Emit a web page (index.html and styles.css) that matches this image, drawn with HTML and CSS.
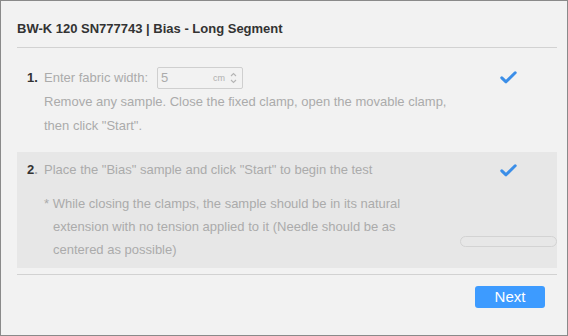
FILE: index.html
```html
<!DOCTYPE html>
<html>
<head>
<meta charset="utf-8">
<link rel="stylesheet" href="styles.css">
</head>
<body>
<div class="dialog">
  <div class="header">BW-K 120 SN777743 | Bias - Long Segment</div>
  <div class="step step1">
    <div class="num">1.</div>
    <div class="body">
      <div class="row">Enter fabric width:
        <span class="input"><span class="val">5</span><span class="unit">cm</span>
          <svg class="spin" width="7" height="14" viewBox="0 0 7 14"><path d="M1 5 L3.5 2.5 L6 5 M1 9 L3.5 11.5 L6 9" fill="none" stroke="#b5b5b5" stroke-width="1.1"/></svg>
        </span>
      </div>
      <div class="row">Remove any sample. Close the fixed clamp, open the movable clamp,</div>
      <div class="row">then click "Start".</div>
    </div>
    <div class="side">
      <svg class="check" width="17" height="13" viewBox="0 0 17 13"><path d="M1.8 6.8 L6 10.8 L15.2 1.8" fill="none" stroke="#3b8ee8" stroke-width="3" stroke-linecap="round" stroke-linejoin="round"/></svg>
    </div>
  </div>
  <div class="step step2">
    <div class="num">2<span class="dot">.</span></div>
    <div class="body">
      <div class="row">Place the "Bias" sample and click "Start" to begin the test</div>
      <div class="note">
        <div class="nrow">* While closing the clamps, the sample should be in its natural</div>
        <div class="nrow indent">extension with no tension applied to it (Needle should be as</div>
        <div class="nrow indent">centered as possible)</div>
      </div>
    </div>
    <div class="side side2">
      <svg class="check" width="17" height="13" viewBox="0 0 17 13"><path d="M1.8 6.8 L6 10.8 L15.2 1.8" fill="none" stroke="#3b8ee8" stroke-width="3" stroke-linecap="round" stroke-linejoin="round"/></svg>
      <div class="progress"></div>
    </div>
  </div>
  <div class="footer">
    <button class="next">Next</button>
  </div>
</div>
</body>
</html>
```
FILE: styles.css
```css
html, body {
  margin: 0;
  padding: 0;
}
body {
  width: 568px;
  height: 336px;
  font-family: "Liberation Sans", Arial, sans-serif;
}
.dialog {
  box-sizing: border-box;
  width: 568px;
  height: 336px;
  border: 1px solid #8a8a8a;
  background: #f2f2f2;
  padding: 0 10px 0 16px;
  display: flex;
  flex-direction: column;
}
.header {
  height: 47px;
  box-sizing: border-box;
  padding-top: 20px;
  font-size: 13px;
  font-weight: bold;
  color: #333;
  line-height: 16px;
  border-bottom: 1px solid #d2d2d2;
}
.step {
  display: flex;
  font-size: 13px;
  color: #ababab;
}
.step1 {
  padding: 18px 0 14px 10px;
}
.num {
  width: 17px;
  font-weight: bold;
  color: #333;
  line-height: 24px;
}
.dot {
  color: #ababab;
}
.body {
  flex: 1;
}
.row {
  line-height: 24px;
  height: 24px;
  display: flex;
  align-items: center;
}
.input {
  box-sizing: border-box;
  width: 86px;
  height: 22px;
  margin-left: 9px;
  border: 1px solid #cfcfcf;
  border-radius: 2px;
  display: flex;
  align-items: center;
  padding: 0 5px 0 3px;
}
.val {
  flex: 1;
  color: #ababab;
  font-size: 13px;
}
.unit {
  font-size: 9px;
  color: #b0b0b0;
  margin-right: 5px;
}
.spin {
  display: block;
}
.side {
  width: 97px;
  display: flex;
  flex-direction: column;
  align-items: center;
}
.check {
  display: block;
  margin-top: 5px;
}
.step2 {
  background: #e7e7e7;
  padding: 6px 0 7px 10px;
  height: 116px;
  box-sizing: border-box;
}
.note {
  margin-top: 10px;
}
.nrow {
  line-height: 23px;
  height: 23px;
}
.indent {
  padding-left: 9px;
}
.side2 {
  justify-content: space-between;
  align-items: stretch;
}
.side2 .check {
  align-self: center;
  margin-top: 6px;
}
.progress {
  box-sizing: border-box;
  height: 11px;
  border: 1px solid #d3d3d3;
  border-radius: 6px;
  margin-bottom: 14px;
}
.footer {
  margin-top: 6px;
  border-top: 1px solid #d2d2d2;
  display: flex;
  justify-content: flex-end;
  padding: 11px 12px 0 0;
}
.next {
  width: 70px;
  height: 22px;
  border: none;
  border-radius: 3px;
  background: #3d9bff;
  color: #fff;
  font-family: "Liberation Sans", Arial, sans-serif;
  font-size: 15px;
  padding: 0;
  line-height: 22px;
}
```
